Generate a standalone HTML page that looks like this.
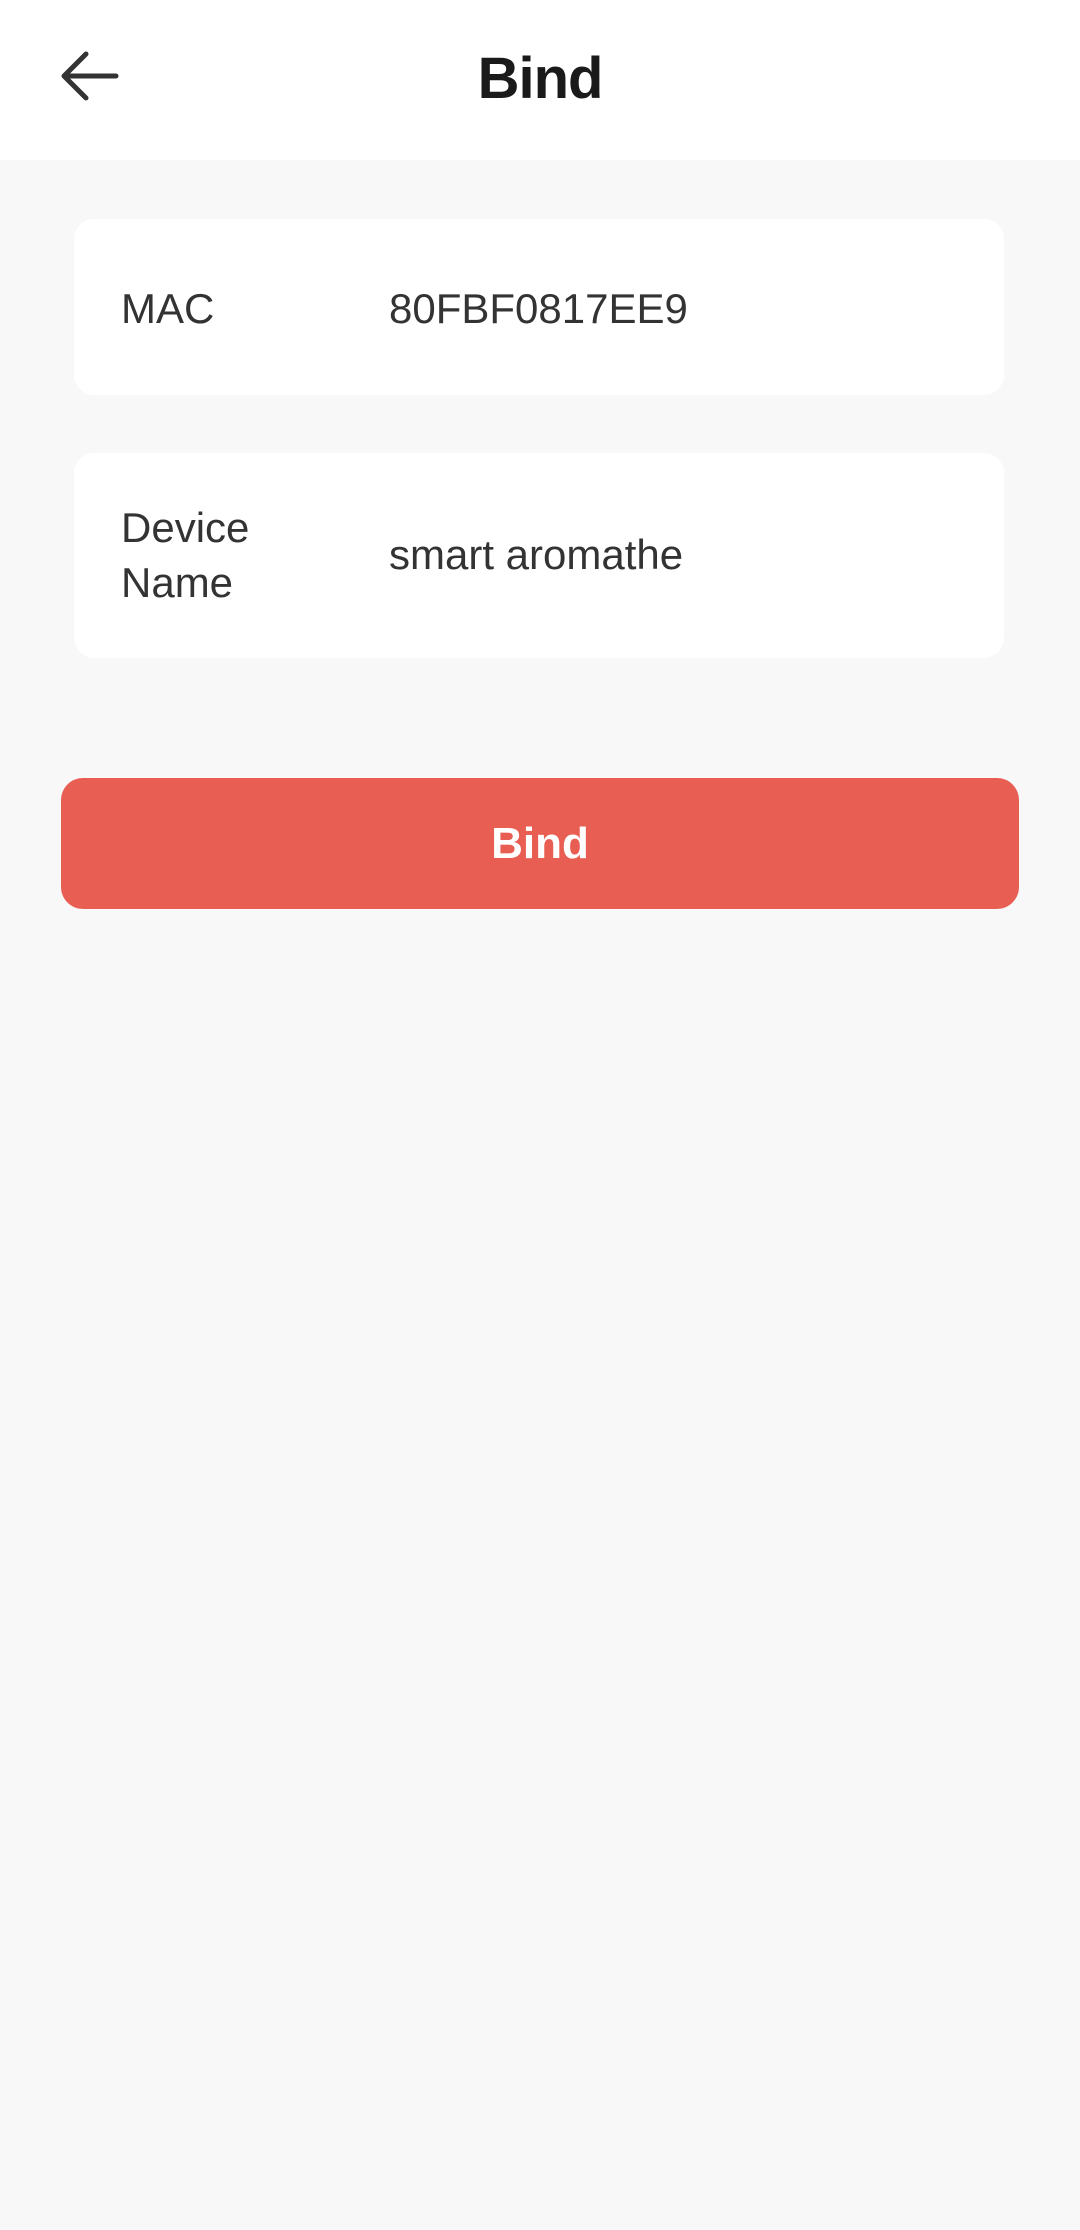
<!DOCTYPE html>
<html><head><meta charset="utf-8"><style>
*{margin:0;padding:0;box-sizing:border-box}
body{width:1080px;height:2230px;background:#f8f8f8;font-family:"Liberation Sans",sans-serif;position:relative;overflow:hidden;color:#333}
.hdr{position:absolute;left:0;top:0;width:1080px;height:160px;background:#fff}
.title{position:absolute;left:0;width:1080px;top:44px;text-align:center;font-size:58px;line-height:70px;font-weight:bold;color:#1a1a1a;letter-spacing:-1px}
.card{position:absolute;left:74px;width:930px;background:#fff;border-radius:20px}
.t{position:absolute;font-size:42px;line-height:55px;color:#333;white-space:nowrap}
.btn{position:absolute;left:61px;top:778px;width:958px;height:131px;background:#e95e53;border-radius:22px;color:#fff;font-size:44px;font-weight:bold;text-align:center;line-height:131px}
</style></head><body>
<div class="hdr">
<svg style="position:absolute;left:58px;top:48px" width="64" height="56" viewBox="0 0 64 56"><path d="M58 28H8M28 6L6 28L28 50" fill="none" stroke="#333" stroke-width="5" stroke-linecap="round" stroke-linejoin="round"/></svg>
<div class="title">Bind</div>
</div>
<div class="card" style="top:219px;height:176px">
<div class="t" style="left:47px;top:62px">MAC</div>
<div class="t" style="left:315px;top:62px">80FBF0817EE9</div>
</div>
<div class="card" style="top:453px;height:205px">
<div class="t" style="left:47px;top:47px">Device<br>Name</div>
<div class="t" style="left:315px;top:74px">smart aromathe</div>
</div>
<div class="btn">Bind</div>
</body></html>
